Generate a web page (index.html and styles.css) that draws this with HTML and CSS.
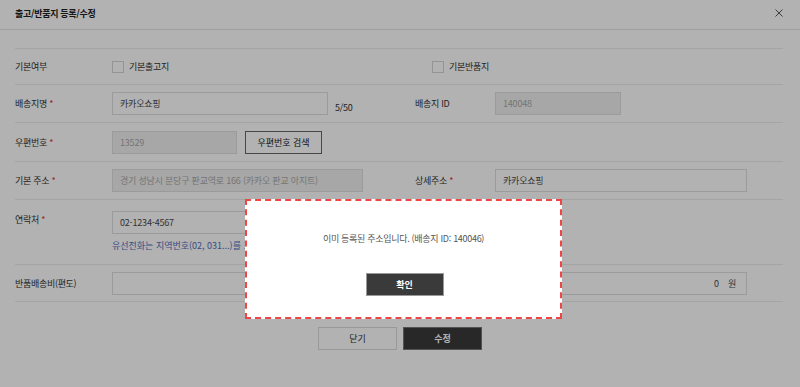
FILE: index.html
```html
<!DOCTYPE html>
<html lang="ko">
<head>
  <meta charset="UTF-8" />
  <title>출고/반품지 등록/수정</title>
  <link rel="stylesheet" href="styles.css">
</head>
<body>

  <div class="modal">
    <div class="modal-head">
      <h1>출고/반품지 등록/수정</h1>
      <span class="close">
        <svg width="8" height="8" viewBox="0 0 8 8"><path d="M0.5 0.5 L7.5 7.5 M7.5 0.5 L0.5 7.5" stroke="#444" stroke-width="0.9" fill="none"/></svg>
      </span>
    </div>

    <div class="modal-body">
      <div class="row row-check">
        <div class="label">기본여부</div>
        <div class="checks">
          <label class="check first"><span class="box"></span>기본출고지</label>
          <label class="check"><span class="box"></span>기본반품지</label>
        </div>
      </div>

      <div class="row row-name">
        <div class="label">배송지명 <em>*</em></div>
        <div class="cell">
          <input class="input w216" type="text" value="카카오쇼핑">
          <span class="count">5/50</span>
        </div>
        <div class="label">배송지 ID</div>
        <div class="cell">
          <input class="input w126" type="text" value="140048" disabled>
        </div>
      </div>

      <div class="row row-zip">
        <div class="label">우편번호 <em>*</em></div>
        <div class="cell span3">
          <input class="input w125" type="text" value="13529" disabled>
          <button class="btn-line" type="button">우편번호 검색</button>
        </div>
      </div>

      <div class="row row-addr">
        <div class="label">기본 주소 <em>*</em></div>
        <div class="cell">
          <input class="input w251" type="text" value="경기 성남시 분당구 판교역로 166 (카카오 판교 아지트)" disabled>
        </div>
        <div class="label">상세주소 <em>*</em></div>
        <div class="cell">
          <input class="input w252" type="text" value="카카오쇼핑">
        </div>
      </div>

      <div class="row row-tel">
        <div class="label">연락처 <em>*</em></div>
        <div class="cell span3 stack">
          <input class="input w216" type="text" value="02-1234-4567">
          <p class="help">유선전화는 지역번호(02, 031...)를 포함해 입력해주세요.</p>
        </div>
      </div>

      <div class="row row-fee">
        <div class="label">반품배송비(편도)</div>
        <div class="cell span3">
          <div class="input money"><span>0</span><span>원</span></div>
        </div>
      </div>

      <div class="actions">
        <button class="btn-line wide" type="button">닫기</button>
        <button class="btn-dark wide" type="button">수정</button>
      </div>
    </div>
  </div>

  <div class="dim"></div>

  <div class="alert">
    <p class="alert-msg">이미 등록된 주소입니다. (배송지 ID: 140046)</p>
    <button class="btn-dark alert-ok" type="button">확인</button>
  </div>

</body>
</html>
```

FILE: styles.css
```css
* { box-sizing: border-box; }
html, body { margin: 0; height: 100%; }
body { font-family: "Noto Sans CJK KR", "Noto Sans", sans-serif; font-size: 9px; color: #333; background: #fff; letter-spacing: -0.3px; overflow: hidden; }

.modal { width: 800px; height: 387px; background: #fff; }
.modal-head { height: 30px; border-bottom: 1px solid #e6e6e6; display: flex; align-items: center; justify-content: space-between; padding: 0 17px 0 15px; }
.modal-head h1 { margin: 0; font-size: 9px; font-weight: bold; color: #222; padding-bottom: 3px; }
.close { display: flex; margin-top: -4px; }

.modal-body { padding: 18px 17px 0 15px; }

.row { display: grid; grid-template-columns: 97px 303px 80px 1fr; align-items: center; border-top: 1px solid #ebebeb; }
.row-check { height: 36px; }
.row-name { height: 38px; }
.row-zip { height: 39px; }
.row-addr { height: 38px; }
.row-tel { height: 65px; align-items: start; padding-top: 11px; }
.row-tel .label { padding-top: 2px; }
.row-fee { height: 38px; border-bottom: 1px solid #ebebeb; }

.label { color: #333; font-size: 9px; }
.label em { font-style: normal; color: #e03131; }
.cell { display: flex; align-items: center; gap: 8px; }
.span3 { grid-column: 2 / 5; }
.stack { flex-direction: column; align-items: flex-start; gap: 5px; }

.checks { display: flex; grid-column: 2 / 5; }
.check { display: flex; align-items: center; gap: 5px; color: #333; }
.check.first { width: 320px; }
.box { width: 12px; height: 12px; border: 1px solid #d5d5d5; background: #fff; }

.input { height: 23px; border: 1px solid #dedede; background: #fff; padding: 0 7px; font-family: inherit; font-size: 9px; font-weight: normal; color: #4a4a4a; letter-spacing: -0.2px; }
.input:disabled { background: #f0f0f0; color: #a8a8a8; }
.w216 { width: 216px; }
.w126 { width: 126px; }
.w125 { width: 125px; }
.w251 { width: 251px; }
.w252 { width: 252px; }
.count { align-self: flex-end; margin-bottom: 1px; margin-left: -1px; color: #333; }
.money { width: 635px; display: flex; align-items: center; justify-content: flex-end; gap: 9px; padding-right: 10px; }

.help { margin: 0; color: #4f6fc0; letter-spacing: 0; }

.btn-line { height: 23px; border: 1px solid #666; background: #fff; color: #222; font-family: inherit; font-size: 9px; padding: 0; width: 77px; white-space: nowrap; }
.btn-dark { height: 23px; border: 1px solid #999; background: #3a3a3a; color: #fff; font-family: inherit; font-size: 9px; font-weight: bold; padding: 0; }
.wide { width: 79px; }
.actions .btn-line { border-color: #dcdcdc; color: #333; }
.actions .btn-dark { border-color: #777; }

.actions { display: flex; justify-content: center; gap: 6px; margin-top: 25px; padding-left: 2px; }

.dim { position: fixed; inset: 0; background: rgba(0, 0, 0, 0.3); }

.alert { position: absolute; left: 245px; top: 199px; width: 317px; height: 120px; background: #fff; border: 2px dashed #f04545; display: flex; flex-direction: column; align-items: center; }
.alert-msg { margin: 31px 0 0; color: #555; font-size: 9px; }
.alert-ok { margin-top: 28px; width: 78px; margin-left: 2px; }
```
